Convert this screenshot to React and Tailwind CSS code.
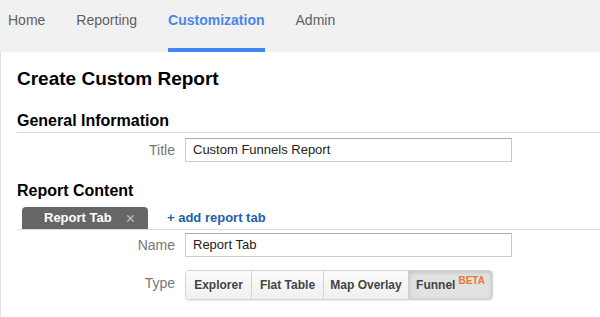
import { X } from 'lucide-react'

const navItems = ['Home', 'Reporting', 'Customization', 'Admin']

const types = [
  { label: 'Explorer', w: 'w-[65px]' },
  { label: 'Flat Table', w: 'w-[72px]' },
  { label: 'Map Overlay', w: 'w-[85px]' },
  { label: 'Funnel', w: 'w-[84px]', active: true, beta: true },
]

function Field({ label, value, className = '' }) {
  return (
    <div className={`flex items-center ${className}`}>
      <span className="w-[158px] text-right text-[14px] text-[#777]">{label}</span>
      <div className="ml-[10px] w-[327px] h-[24px] flex items-center px-[7px] border border-[#cbcbcb] border-t-[#a9a9a9] text-[13px] text-[#222] bg-white">
        {value}
      </div>
    </div>
  )
}

export default function App() {
  return (
    <div className="min-h-screen flex flex-col bg-white font-['Liberation_Sans',Arial,sans-serif]">
      <nav className="h-[52px] bg-[#f1f1f1] flex pl-2 gap-[31px]">
        {navItems.map((item) => {
          const active = item === 'Customization'
          return (
            <div key={item} className="h-full flex flex-col justify-between">
              <span className={`pt-[11px] leading-[18px] text-[14px] ${active ? 'font-bold text-[#4a86e8]' : 'text-[#5f5f5f]'}`}>
                {item}
              </span>
              <span className={`h-[4px] ${active ? 'bg-[#4285f4]' : 'bg-transparent'}`} />
            </div>
          )
        })}
      </nav>

      <main className="flex-1 border-l border-[#e2e2e2] pl-4 pt-4">
        <h1 className="text-[19px] leading-[22px] font-bold text-black">Create Custom Report</h1>

        <h2 className="mt-[21px] text-[16px] leading-[20px] font-bold text-black pb-[1px] border-b border-[#dcdcdc]">
          General Information
        </h2>
        <Field label="Title" value="Custom Funnels Report" className="mt-[5px]" />

        <h2 className="mt-[19px] text-[16px] leading-[20px] font-bold text-black">Report Content</h2>

        <div className="mt-[6px] flex items-end border-b border-[#dcdcdc]">
          <div className="ml-[5px] w-[126px] h-[22px] bg-[#666] rounded-t-[4px] flex items-center pl-[22px] pr-[12px] justify-between">
            <span className="text-[13px] font-bold text-white">Report Tab</span>
            <X size={11} strokeWidth={3.5} className="text-[#b5b5b5]" />
          </div>
          <span className="ml-[19px] h-[22px] flex items-center text-[13px] font-bold text-[#1d5fae]">
            + add report tab
          </span>
        </div>

        <Field label="Name" value="Report Tab" className="mt-[3px]" />

        <div className="mt-[13px] flex items-center">
          <span className="w-[158px] text-right text-[14px] text-[#777] -mt-[3px]">Type</span>
          <div className="ml-[10px] flex h-[30px] border border-[#d2d2d2] rounded-[4px] overflow-hidden shadow-[0_1px_1px_rgba(0,0,0,0.08)]">
            {types.map((t, i) => (
              <div
                key={t.label}
                className={`${t.w} flex items-center justify-center text-[12px] font-bold text-[#444] ${i > 0 ? 'border-l border-[#d2d2d2]' : ''} ${
                  t.active
                    ? 'bg-[#e2e2e2] shadow-[inset_0_1px_4px_rgba(0,0,0,0.18)] text-[#333]'
                    : 'bg-gradient-to-b from-[#fbfbfb] to-[#f0f0f0]'
                }`}
              >
                {t.label}
                {t.beta && <sup className="ml-[3px] text-[10px] font-bold text-[#e8782c] -top-[4px]">BETA</sup>}
              </div>
            ))}
          </div>
        </div>
      </main>
    </div>
  )
}
